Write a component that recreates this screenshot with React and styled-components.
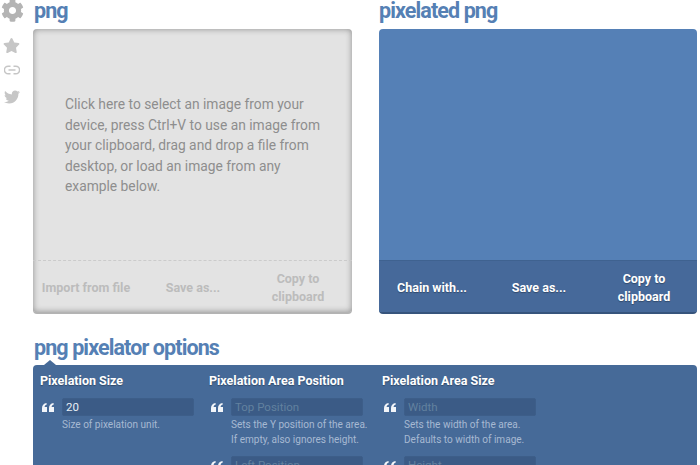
import React from "react";
import styled, { createGlobalStyle } from "styled-components";
import { FaCog, FaStar, FaTwitter } from "react-icons/fa";

const Global = createGlobalStyle`
  html, body { margin: 0; padding: 0; background: #fff; }
  body { font-family: Roboto, "Liberation Sans", sans-serif; width: 700px; height: 465px; overflow: hidden; }
`;
const Page = styled.div`display: flex; width: 700px; height: 465px; overflow: hidden;`;
const Side = styled.nav`
  width: 33px; flex: none; display: flex; flex-direction: column; align-items: flex-start;
  color: #c6c6c6;
`;
const Main = styled.main`width: 664px; flex: none;`;
const Tools = styled.div`display: grid; grid-template-columns: 319px 318px; column-gap: 27px;`;
const Heading = styled.h2`
  margin: 0; padding-left: ${p => p.$flush ? 0 : 1}px; height: 29px; font-size: 21.5px; line-height: 22px; font-weight: 700; letter-spacing: -0.9px; color: #5580b4;
`;
const OptionsHeading = styled(Heading)`margin-top: 23px; height: 28px;`;
const Panel = styled.section`
  height: 285px; box-sizing: border-box; display: flex; flex-direction: column; border-radius: 4px; overflow: hidden;
  background: ${p => p.$out ? "#5580b6" : "#e3e3e3"};
  box-shadow: ${p => p.$out ? "none" : "inset 0 0 6px rgba(0,0,0,.38)"};
  border-bottom: 2px solid ${p => p.$out ? "#36547c" : "#b3b3b3"};
`;
const Body = styled.div`
  flex: 1; box-sizing: border-box; padding: 65px 24px 0 32px; font-size: 13.8px; line-height: 20.5px; color: #8e8e8e;
`;
const Bar = styled.div`
  height: 52px; box-sizing: border-box; padding-top: 2px; flex: none; display: grid; grid-template-columns: 106px 108px 102px; align-items: center; text-align: center;
  font-size: 12.5px; line-height: 18px; font-weight: 700;
  color: ${p => p.$out ? "#fff" : "#bcbcbc"};
  background: ${p => p.$out ? "#46699a" : "transparent"};
  border-top: 1px ${p => p.$out ? "solid #3f6290" : "dashed #cbcbcb"};
  text-shadow: ${p => p.$out ? "0 1px 1px rgba(0,0,0,.3)" : "none"};
`;
const Action = styled.div``;
const Options = styled.section`
  position: relative; height: 110px; border-radius: 4px 4px 0 0; background: #466a98; padding: 8px 7px 0; box-sizing: border-box;
  display: grid; grid-template-columns: 169px 173px 1fr;
  &::before {
    content: ""; position: absolute; left: 11px; top: -5px; width: 0; height: 0;
    border-left: 6px solid transparent; border-right: 6px solid transparent; border-bottom: 5px solid #466a98;
  }
`;
const Column = styled.div`display: flex; flex-direction: column;`;
const ColTitle = styled.h3`
  margin: 0 0 10px; font-size: 12.5px; line-height: 15px; font-weight: 700; color: #fff; text-shadow: 0 1px 1px rgba(0,0,0,.3);
`;
const Field = styled.div`
  display: grid; grid-template-columns: 22px 132px; margin-bottom: 9px;
`;
const QuoteMark = styled.svg`display: block; margin: 5px 0 0 2px; color: #f2f5f9;`;
const Input = styled.input`
  width: 132px; height: 18px; box-sizing: border-box; border: 1px solid #3d5e89; border-radius: 2px; background: #3b5b86; padding: 0 3px;
  font: 400 11.5px Roboto, sans-serif; color: #e8eef5; outline: none;
  &::placeholder { color: #62819f; opacity: 1; }
`;
const Help = styled.div`
  grid-column: 2; width: 170px; margin-top: 1px; font-size: 10.05px; line-height: 15px; color: #a6b9d2; white-space: nowrap;
`;

const GearSlot = styled.span`display: block; height: 22px; margin: -1px 0 0 1px; font-size: 23px; line-height: 0; color: #b4b4b4;`;
const StarSlot = styled.span`display: block; height: 16px; margin: 16px 0 0 3px; font-size: 17px; line-height: 0;`;
const LinkIcon = styled.svg`display: block; margin: 12px 0 0 4px;`;
const BirdSlot = styled.span`display: block; margin: 14px 0 0 4px; font-size: 16px; line-height: 0;`;

const Opt = ({ ph, val, help }) => (
  <Field>
    <QuoteMark width="12" height="9" viewBox="0 0 12 9" fill="currentColor">
      <path d="M0 5.200C0 2.200 1.600.5 4.600 0v1.800C3.300 2.100 2.700 2.800 2.600 4H5v5H0zM7 5.200C7 2.200 8.600.5 11.600 0v1.800C10.300 2.100 9.700 2.800 9.600 4H12v5H7z" />
    </QuoteMark>
    <Input placeholder={ph} defaultValue={val} />
    {help && <Help>{help.map(h => <div key={h}>{h}</div>)}</Help>}
  </Field>
);

export default function App() {
  return (
    <Page>
      <Global />
      <Side>
        <GearSlot><FaCog /></GearSlot>
        <StarSlot><FaStar /></StarSlot>
        <LinkIcon width="16" height="10" viewBox="0 0 16 10" fill="none" stroke="currentColor" strokeWidth="1.500">
          <path d="M6.500 1.200H4.200a3.800 3.800 0 0 0 0 7.600h2.300M9.500 1.200h2.300a3.800 3.800 0 0 1 0 7.600H9.500M4.500 5h7" />
        </LinkIcon>
        <BirdSlot><FaTwitter /></BirdSlot>
      </Side>
      <Main>
        <Tools>
          <div>
            <Heading>png</Heading>
            <Panel>
              <Body>Click here to select an image from your device, press Ctrl+V to use an image from your clipboard, drag and drop a file from desktop, or load an image from any example below.</Body>
              <Bar><Action>Import from file</Action><Action>Save as...</Action><Action>Copy to<br />clipboard</Action></Bar>
            </Panel>
          </div>
          <div>
            <Heading $flush>pixelated png</Heading>
            <Panel $out>
              <Body />
              <Bar $out><Action>Chain with...</Action><Action>Save as...</Action><Action>Copy to<br />clipboard</Action></Bar>
            </Panel>
          </div>
        </Tools>
        <OptionsHeading>png pixelator options</OptionsHeading>
        <Options>
          <Column>
            <ColTitle>Pixelation Size</ColTitle>
            <Opt val="20" help={["Size of pixelation unit."]} />
          </Column>
          <Column>
            <ColTitle>Pixelation Area Position</ColTitle>
            <Opt ph="Top Position" help={["Sets the Y position of the area.", "If empty, also ignores height."]} />
            <Opt ph="Left Position" />
          </Column>
          <Column>
            <ColTitle>Pixelation Area Size</ColTitle>
            <Opt ph="Width" help={["Sets the width of the area.", "Defaults to width of image."]} />
            <Opt ph="Height" />
          </Column>
        </Options>
      </Main>
    </Page>
  );
}
